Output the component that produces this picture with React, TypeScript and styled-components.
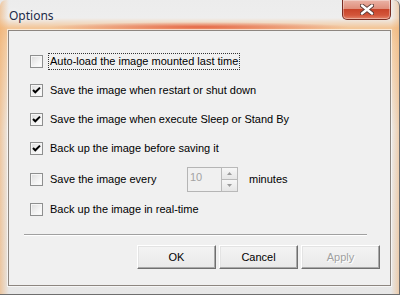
import React from "react";
import styled, { createGlobalStyle } from "styled-components";

const Global = createGlobalStyle`
  html, body { margin: 0; padding: 0; width: 400px; height: 295px; overflow: hidden; background: #e9e9e9; }
  #root { width: 400px; height: 295px; }
`;

const Win = styled.div`
  width: 400px;
  height: 295px;
  box-sizing: border-box;
  display: flex;
  flex-direction: column;
  padding: 0 8px 8px 8px;
  border-right: 1px solid #6e6e6e;
  border-bottom: 1px solid #6e6e6e;
  border-radius: 6px 6px 0 0;
  background:
    radial-gradient(ellipse 150px 5px at 50% 27px, rgba(225, 70, 40, 0.75), rgba(225, 70, 40, 0) 100%),
    linear-gradient(to right, rgba(240, 170, 100, 0.55) 0, rgba(240, 170, 100, 0) 9px, rgba(240, 170, 100, 0) 391px, rgba(240, 170, 100, 0.5) 400px),
    linear-gradient(to bottom, #ececec 0, #eeeeee 18px, #f3c698 28px, #f3d2ae 45px, #ececec 130px, #e7e7e7 100%);
  font-family: "Liberation Sans", Arial, sans-serif;
`;

const TitleBar = styled.div`
  height: 30px;
  flex: none;
  display: flex;
  align-items: flex-start;
  justify-content: space-between;
`;

const Title = styled.div`
  font-family: "Noto Sans", "Open Sans", sans-serif;
  font-size: 12px;
  color: #1b2a48;
  padding: 7px 0 0 1px;
  text-shadow: 0 0 6px rgba(255, 255, 255, 0.9);
`;

const CloseBtn = styled.div`
  width: 49px;
  height: 20px;
  box-sizing: border-box;
  border: 1px solid #7a2c22;
  border-top: none;
  border-radius: 0 0 5px 5px;
  background: linear-gradient(to bottom, #eab3a6 0, #e08f7c 45%, #c9442a 50%, #d3563b 80%, #e4846a 100%);
  box-shadow: inset 0 0 0 1px rgba(255, 255, 255, 0.35);
  display: flex;
  align-items: center;
  justify-content: center;
`;

const Client = styled.div`
  flex: 1;
  display: flex;
  flex-direction: column;
  background: #f0f0f0;
  border: 1px solid #8d8680;
  box-shadow: 0 0 0 1px rgba(255, 255, 255, 0.6);
  padding: 16px 10px 0 21px;
`;

const Row = styled.div<{ $h: number }>`
  height: ${(p) => p.$h}px;
  display: flex;
  align-items: center;
  font-size: 11px;
  color: #000;
`;

const Box = styled.div`
  width: 13px;
  height: 13px;
  box-sizing: border-box;
  border: 1px solid #8e8f8f;
  background: linear-gradient(135deg, #dcdcdc 0, #f4f4f4 60%, #ffffff 100%);
  box-shadow: inset 0 0 0 1px #f6f6f6;
  display: flex;
  align-items: center;
  justify-content: center;
  flex: none;
`;

const Label = styled.span<{ $focus?: boolean; $w?: number }>`
  margin-left: 5px;
  padding: 1px 1px 2px 1px;
  border: 1px dotted ${(p) => (p.$focus ? "#333" : "transparent")};
  white-space: nowrap;
  ${(p) => (p.$w ? `width: ${p.$w}px; box-sizing: border-box;` : "")}
`;

const Spin = styled.div`
  display: flex;
  height: 25px;
`;

const Edit = styled.div`
  width: 34px;
  box-sizing: border-box;
  border: 1px solid #b5b5b5;
  border-right: none;
  background: #f0f0f0;
  color: #a3a3a3;
  font-size: 11px;
  padding: 3px 0 0 2px;
`;

const SpinCol = styled.div`
  display: flex;
  flex-direction: column;
  width: 17px;
`;

const SpinBtn = styled.div`
  flex: 1;
  box-sizing: border-box;
  border: 1px solid #b9b9b9;
  background: linear-gradient(to bottom, #f6f6f6, #e6e6e6);
  display: flex;
  align-items: center;
  justify-content: center;
  & + & { border-top: none; }
`;

const After = styled.span`
  margin-left: 11px;
`;

const Sep = styled.div`
  margin: 10px 13px 0 -6px;
  height: 1px;
  background: #a0a0a0;
  border-bottom: 1px solid #ffffff;
`;

const Buttons = styled.div`
  display: flex;
  justify-content: flex-end;
  gap: 3px;
  margin-top: 9px;
`;

const Btn = styled.div<{ $disabled?: boolean }>`
  width: 79px;
  height: 24px;
  box-sizing: border-box;
  display: flex;
  align-items: center;
  justify-content: center;
  font-size: 11px;
  color: ${(p) => (p.$disabled ? "#a0a0a0" : "#000")};
  background: linear-gradient(to bottom, #f4f4f4, #e9e9e9);
  border-top: 1px solid #ffffff;
  border-left: 1px solid #ffffff;
  border-right: 1px solid #6f6f6f;
  border-bottom: 1px solid #6f6f6f;
  box-shadow: inset -1px -1px 0 #a9a9a9, inset 1px 1px 0 #e3e3e3;
  text-shadow: ${(p) => (p.$disabled ? "1px 1px 0 #ffffff" : "none")};
`;

const Check = () => (
  <svg width="9" height="9" viewBox="0 0 9 9">
    <polyline points="1,4 3.3,6.3 8,1.6" fill="none" stroke="#000" strokeWidth="2" />
  </svg>
);

const Arrow = ({ up }: { up?: boolean }) => (
  <svg width="5" height="3" viewBox="0 0 5 3">
    <polygon points={up ? "0,3 5,3 2.5,0" : "0,0 5,0 2.5,3"} fill="#9a9a9a" />
  </svg>
);

const Item = ({ checked, text, focus, h = 29 }: { checked?: boolean; text: string; focus?: boolean; h?: number }) => (
  <Row $h={h}>
    <Box>{checked && <Check />}</Box>
    <Label $focus={focus}>{text}</Label>
  </Row>
);

export default function App() {
  return (
    <>
      <Global />
      <Win>
        <TitleBar>
          <Title>Options</Title>
          <CloseBtn>
            <svg width="14" height="11" viewBox="0 0 14 11">
              <path d="M2 1.5 L12 9.5 M12 1.5 L2 9.5" stroke="#5a3a36" strokeWidth="4.2" strokeLinecap="round" />
              <path d="M2 1.5 L12 9.5 M12 1.5 L2 9.5" stroke="#ffffff" strokeWidth="2.4" strokeLinecap="round" />
            </svg>
          </CloseBtn>
        </TitleBar>
        <Client>
          <Item text="Auto-load the image mounted last time" focus />
          <Item checked text="Save the image when restart or shut down" />
          <Item checked text="Save the image when execute Sleep or Stand By" />
          <Item checked text="Back up the image before saving it" />
          <Row $h={32}>
            <Box />
            <Label $w={139}>Save the image every</Label>
            <Spin>
              <Edit>10</Edit>
              <SpinCol>
                <SpinBtn><Arrow up /></SpinBtn>
                <SpinBtn><Arrow /></SpinBtn>
              </SpinCol>
            </Spin>
            <After>minutes</After>
          </Row>
          <Item text="Back up the image in real-time" />
          <Sep />
          <Buttons>
            <Btn>OK</Btn>
            <Btn>Cancel</Btn>
            <Btn $disabled>Apply</Btn>
          </Buttons>
        </Client>
      </Win>
    </>
  );
}
